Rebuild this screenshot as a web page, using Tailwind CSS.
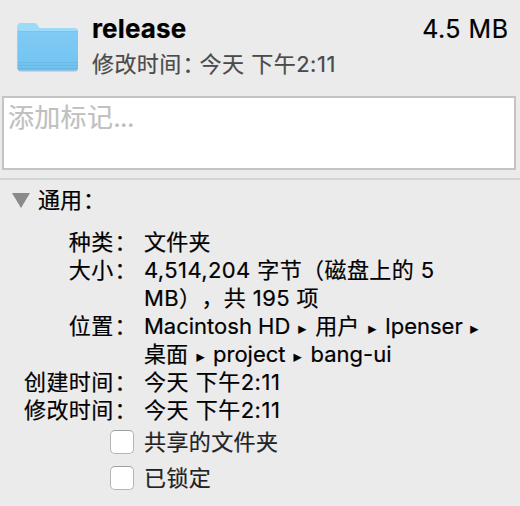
<!DOCTYPE html>
<html lang="zh-CN">
<head>
<meta charset="utf-8">
<title>release</title>
<script src="https://cdn.jsdelivr.net/npm/@tailwindcss/browser@4"></script>
</head>
<body class="w-[520px] h-[506px] overflow-hidden bg-[#ebebeb] text-black font-[Inter,'Noto_Sans_CJK_SC',sans-serif] text-[22px] leading-[28px] whitespace-nowrap [text-spacing-trim:space-all] [-webkit-text-stroke:0.2px]">
<header class="flex h-[96px] pl-[16px] pr-[12px] pt-[14px]">
  <svg class="w-[64px] h-[56px] mt-[5px] shrink-0" viewBox="0 0 64 56">
    <defs>
      <linearGradient id="front" x1="0" y1="0" x2="0" y2="1"><stop offset="0" stop-color="#80cbf4"/><stop offset=".8" stop-color="#74c4f2"/><stop offset="1" stop-color="#6fbdea"/></linearGradient>
    </defs>
    <path d="M1.500 49.500V8a3 3 0 0 1 3-3H18q2.500 0 3.500 2l1 2q.8 1 2.500 1H59a3 3 0 0 1 3 3V49.500a3 3 0 0 1-3 3H4.500a3 3 0 0 1-3-3Z" fill="#a0a0a0" opacity=".6"/>
    <path d="M1.500 48.500V7a3 3 0 0 1 3-3H18q2.500 0 3.500 2l1 2q.8 1 2.500 1H59a3 3 0 0 1 3 3V48.500a3 3 0 0 1-3 3H4.500a3 3 0 0 1-3-3Z" fill="#9bdbf9"/>
    <path d="M1.500 12H62V48.500a3 3 0 0 1-3 3H4.500a3 3 0 0 1-3-3Z" fill="url(#front)"/>
    <path d="M2 43.500H62M2 46.500H62M2 49.500H62" stroke="#62b3e1" stroke-width="1" opacity=".55"/>
    <path d="M2 12.500H62" stroke="#75bce2" stroke-width=".8" opacity=".6"/>
  </svg>
  <div class="ml-[12px] grow">
    <div class="flex justify-between leading-[30px]">
      <h1 class="text-[26px] font-bold tracking-[0.15px]">release</h1>
      <span class="text-[25px] tracking-[0.5px] -mr-[0.5px]">4.5 MB</span>
    </div>
    <div class="mt-[6px] flex text-[#4a4a4a]"><span class="w-[107.500px] tracking-[0.4px]">修改时间<span class="[font-feature-settings:'halt'] inline-block pl-[1px]">：</span></span><span class="tracking-[0.5px]">今天 下午2:11</span></div>
  </div>
</header>
<div class="ml-[2px] w-[514px] h-[74px] border-2 border-[#c4c4c4] bg-white pl-[4px] pt-[2px] text-[26px] leading-[35px] text-[#c0c0c0] tracking-[0.3px]">添加标记<span class="tracking-[-0.6px]">...</span></div>
<div class="mt-[8px] h-[2px] bg-[#d3d3d3]"></div>
<section>
  <h2 class="flex items-center h-[40px] pl-[12px]">
    <svg class="w-[18px] h-[15px]" viewBox="0 0 18 15"><path d="M0 0H18L9 15Z" fill="#8a8a8a"/></svg>
    <span class="ml-[8px]">通用<span class="inline-block pl-[1px]">：</span></span>
  </h2>
  <dl class="mt-[8px] grid grid-cols-[137px_1fr] gap-x-[7px]">
    <dt class="text-right tracking-[0.4px]">种类<span class="inline-block pl-[1px]">：</span></dt>
    <dd class="tracking-[0.2px]">文件夹</dd>
    <dt class="text-right tracking-[0.4px]">大小<span class="inline-block pl-[1px]">：</span></dt>
    <dd class="tracking-[0.4px]"><div>4,514,204 字节（磁盘上的 5</div><div>MB），共 195 项</div></dd>
    <dt class="text-right tracking-[0.4px]">位置<span class="inline-block pl-[1px]">：</span></dt>
    <dd>
      <div class="h-[28px]">Macintosh HD<span class="inline-block w-[25px] pr-[1px] text-center text-[16px] leading-none font-['DejaVu_Sans']">▸</span>用户<span class="inline-block w-[26px] text-center text-[16px] leading-none font-['DejaVu_Sans']">▸</span>lpenser<span class="inline-block w-[25px] pr-[2px] text-center text-[16px] leading-none font-['DejaVu_Sans']">▸</span></div>
      <div class="h-[28px]">桌面<span class="inline-block w-[25px] text-center text-[16px] leading-none font-['DejaVu_Sans']">▸</span>project<span class="inline-block w-[25px] pr-[1px] text-center text-[16px] leading-none font-['DejaVu_Sans']">▸</span>bang-ui</div>
    </dd>
    <dt class="text-right tracking-[0.4px]">创建时间<span class="inline-block pl-[1px]">：</span></dt>
    <dd class="tracking-[0.5px]">今天 下午2:11</dd>
    <dt class="text-right tracking-[0.4px]">修改时间<span class="inline-block pl-[1px]">：</span></dt>
    <dd class="tracking-[0.5px]">今天 下午2:11</dd>
  </dl>
  <div class="pl-[110px] text-[#222222]">
    <label class="flex items-center h-[36px]"><span class="size-[24px] rounded-[5px] border border-[#b4b4b4] border-t-[#a0a0a0] bg-white"></span><span class="ml-[10px] tracking-[0.4px]">共享的文件夹</span></label>
    <label class="flex items-center h-[36px]"><span class="size-[24px] rounded-[5px] border border-[#b4b4b4] border-t-[#a0a0a0] bg-white"></span><span class="ml-[10px] tracking-[0.4px]">已锁定</span></label>
  </div>
</section>
</body>
</html>
